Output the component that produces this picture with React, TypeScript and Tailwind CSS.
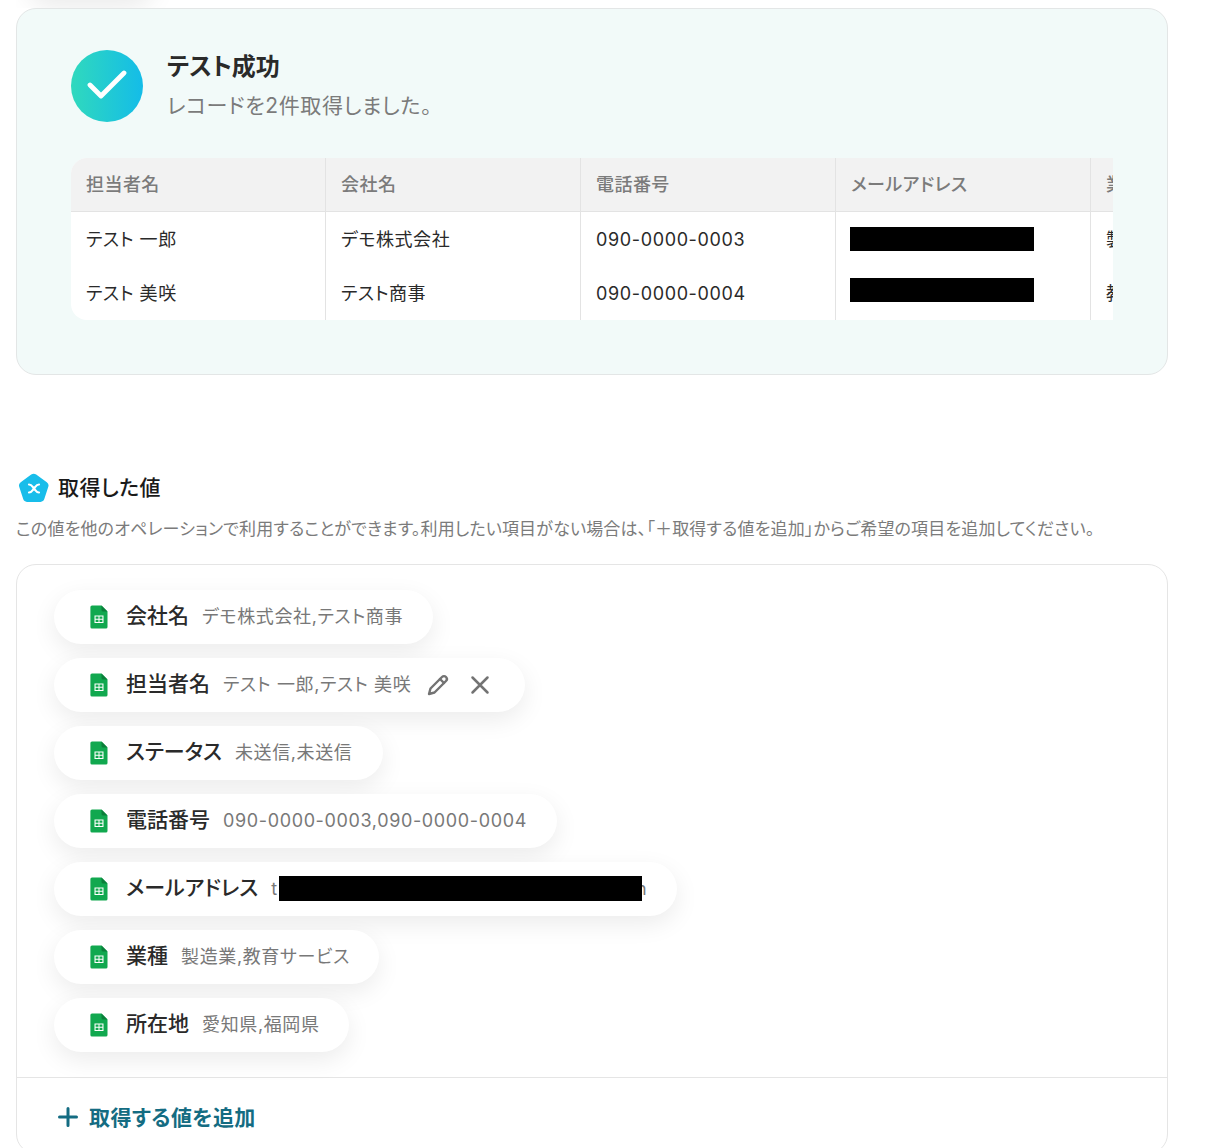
import React from "react";

const font = { fontFamily: '"Inter","Noto Sans CJK JP",sans-serif' };

function SheetIcon() {
  return (
    <svg width="18" height="24" viewBox="0 0 18 24" className="shrink-0">
      <path d="M2 0.5H11.5L17.5 6.5V22a1.6 1.6 0 0 1-1.6 1.6H2A1.6 1.6 0 0 1 .4 22V2.1A1.6 1.6 0 0 1 2 .5Z" fill="#11a84f" />
      <path d="M11.5 .5L17.5 6.5H13a1.5 1.5 0 0 1-1.5-1.5Z" fill="#0b7f3a" />
      <path d="M4.5 10.5h9v7.5h-9Z M5.6 11.6v2.1h2.9v-2.1Z M9.5 11.6v2.1h2.9v-2.1Z M5.6 14.8v2.1h2.9v-2.1Z M9.5 14.8v2.1h2.9v-2.1Z" fill="#fff" fillRule="evenodd" />
    </svg>
  );
}

function Pill({ label, value, children, width }: { label: string; value: string; children?: React.ReactNode; width: string }) {
  return (
    <div className={`relative flex h-[54px] items-center rounded-full bg-white pl-9 shadow-[0_8px_24px_rgba(0,0,0,0.08)] ${width}`}>
      <SheetIcon />
      <span className="ml-[18px] pb-[2px] text-[21px] font-medium whitespace-nowrap text-[#2a2a2a]">{label}</span>
      <span className="ml-[13px] pb-[2px] text-[18px] tracking-[0.035em] whitespace-nowrap text-[#787878]">{value}</span>
      {children}
    </div>
  );
}

const headers = ["担当者名", "会社名", "電話番号", "メールアドレス", "業種"];
const rows = [
  ["テスト 一郎", "デモ株式会社", "090-0000-0003", "", "製造業"],
  ["テスト 美咲", "テスト商事", "090-0000-0004", "", "教育サービス"],
];

function Table() {
  return (
    <div className="mt-9 w-[1042px] overflow-hidden rounded-tl-[16px] rounded-bl-[16px] bg-white">
      <div className="flex h-[54px] w-[1300px] border-b border-[#e3e3e3] bg-[#f2f2f2]">
        {headers.map((h) => (
          <div key={h} className="flex h-full w-[255px] shrink-0 items-center border-r border-[#e3e3e3] pl-[15px] text-[18px] font-medium tracking-[0.025em] text-[#7b7b7b]">
            <span>{h}</span>
          </div>
        ))}
      </div>
      {rows.map((r, i) => (
        <div key={i} className="flex h-[54px] w-[1300px]">
          {r.map((c, j) => (
            <div key={j} className="flex h-full w-[255px] shrink-0 items-center border-r border-[#e3e3e3] pl-[15px] text-[18px] tracking-[0.03em] whitespace-nowrap text-[#2a2a2a]">
              {j === 3 ? (
                <div className={`-ml-px h-6 w-[184px] bg-black ${i === 0 ? "" : "-mt-[6px]"}`} />
              ) : (
                <span className={j === 2 ? "tracking-[0.035em]" : ""}>{c}</span>
              )}
            </div>
          ))}
        </div>
      ))}
    </div>
  );
}

export default function App() {
  return (
    <div style={font} className="h-[1148px] w-[1206px] overflow-hidden bg-white pl-4 [font-feature-settings:'palt']">
      <div className="h-2 overflow-hidden">
        <div className="-mt-[54px] ml-[10px] h-[54px] w-[130px] rounded-full bg-white shadow-[0_8px_24px_rgba(0,0,0,0.08)]" />
      </div>

      <section className="h-[367px] w-[1152px] rounded-[20px] border border-[#e3e6e6] bg-[#f2faf9] pt-[41px] pl-[54px]">
        <div className="flex items-start">
          <div className="flex h-[72px] w-[72px] shrink-0 items-center justify-center rounded-full bg-[linear-gradient(90deg,#30d9bd,#14bce8)]">
            <svg width="40" height="32" viewBox="0 0 40 32" fill="none">
              <path d="M3 15L14 26L37 3" stroke="#fff" strokeWidth="4.800" strokeLinecap="round" strokeLinejoin="round" />
            </svg>
          </div>
          <div className="ml-6">
            <div className="mt-px text-[24px] leading-8 font-bold text-[#2a2a2a]">テスト成功</div>
            <div className="mt-[7px] text-[21px] leading-8 tracking-[0.03em] text-[#7b7b7b]">レコードを2件取得しました。</div>
          </div>
        </div>
        <Table />
      </section>

      <div className="mt-[97px] flex h-8 items-center">
        <svg width="32" height="30" viewBox="0 0 32 30" className="ml-[2px] shrink-0">
          <path d="M13.2 1.6a4.2 4.2 0 0 1 5 0l10.6 7.6a4 4 0 0 1 1.5 4.5l-4 12.4a4 4 0 0 1-3.8 2.800H9a4 4 0 0 1-3.800-2.800l-4-12.400a4 4 0 0 1 1.500-4.500Z" fill="#18bdea" />
          <path d="M11 11.500c2.500 0 3 1.500 5 4c2 2.500 2.500 4 5 4M21 11.500c-2.500 0-3 1.500-5 4c-2 2.500-2.500 4-5 4" stroke="#fff" strokeWidth="2.200" fill="none" strokeLinecap="round" />
        </svg>
        <h2 className="ml-[8px] text-[21px] font-medium tracking-[0.02em] text-[#1a1a1a]">取得した値</h2>
      </div>
      <p className="mt-[13px] text-[17px] leading-6 tracking-[0.01em] whitespace-nowrap text-[#7b7b7b]">
        この値を他のオペレーションで利用することができます。利用したい項目がない場合は、「＋取得する値を追加」からご希望の項目を追加してください。
      </p>

      <section className="mt-[23px] h-[590px] w-[1152px] rounded-[20px] border border-[#e5e5e5] bg-white">
        <div className="flex h-[512px] flex-col gap-[14px] pt-[25px] pl-[37px]">
          <Pill label="会社名" value="デモ株式会社,テスト商事" width="w-[379px]" />
          <Pill label="担当者名" value="テスト 一郎,テスト 美咲" width="w-[471px]">
            <svg width="24" height="24" viewBox="0 0 24 24" fill="none" stroke="#737373" strokeWidth="2.400" strokeLinejoin="round" strokeLinecap="round" className="ml-[15px] shrink-0">
              <path d="M3 21l1.500-5.500L16 4a2.800 2.800 0 0 1 4 4L8.500 19.500Z" />
              <path d="M14 6l4 4" />
            </svg>
            <svg width="20" height="20" viewBox="0 0 20 20" fill="none" stroke="#737373" strokeWidth="2.500" strokeLinecap="round" className="ml-[20px] shrink-0">
              <path d="M2.500 2.500l15 15M17.500 2.500l-15 15" />
            </svg>
          </Pill>
          <Pill label="ステータス" value="未送信,未送信" width="w-[329px]" />
          <Pill label="電話番号" value="090-0000-0003,090-0000-0004" width="w-[503px]" />
          <Pill label="メールアドレス" value="t" width="w-[623px]">
            <span className="absolute left-[582px] pb-[2px] text-[18px] text-[#787878]">n</span>
            <div className="absolute top-[14px] left-[225px] h-[25px] w-[363px] bg-black" />
          </Pill>
          <Pill label="業種" value="製造業,教育サービス" width="w-[325px]" />
          <Pill label="所在地" value="愛知県,福岡県" width="w-[295px]" />
        </div>
        <div className="flex h-[78px] items-center border-t border-[#e5e5e5] pl-[41px]">
          <svg width="20" height="20" viewBox="0 0 20 20" stroke="#146c82" strokeWidth="3" strokeLinecap="round" className="shrink-0">
            <path d="M10 1.500v17M1.500 10h17" />
          </svg>
          <span className="ml-[11px] pt-[2px] text-[21px] font-bold tracking-[0.02em] text-[#146c82]">取得する値を追加</span>
        </div>
      </section>
    </div>
  );
}
